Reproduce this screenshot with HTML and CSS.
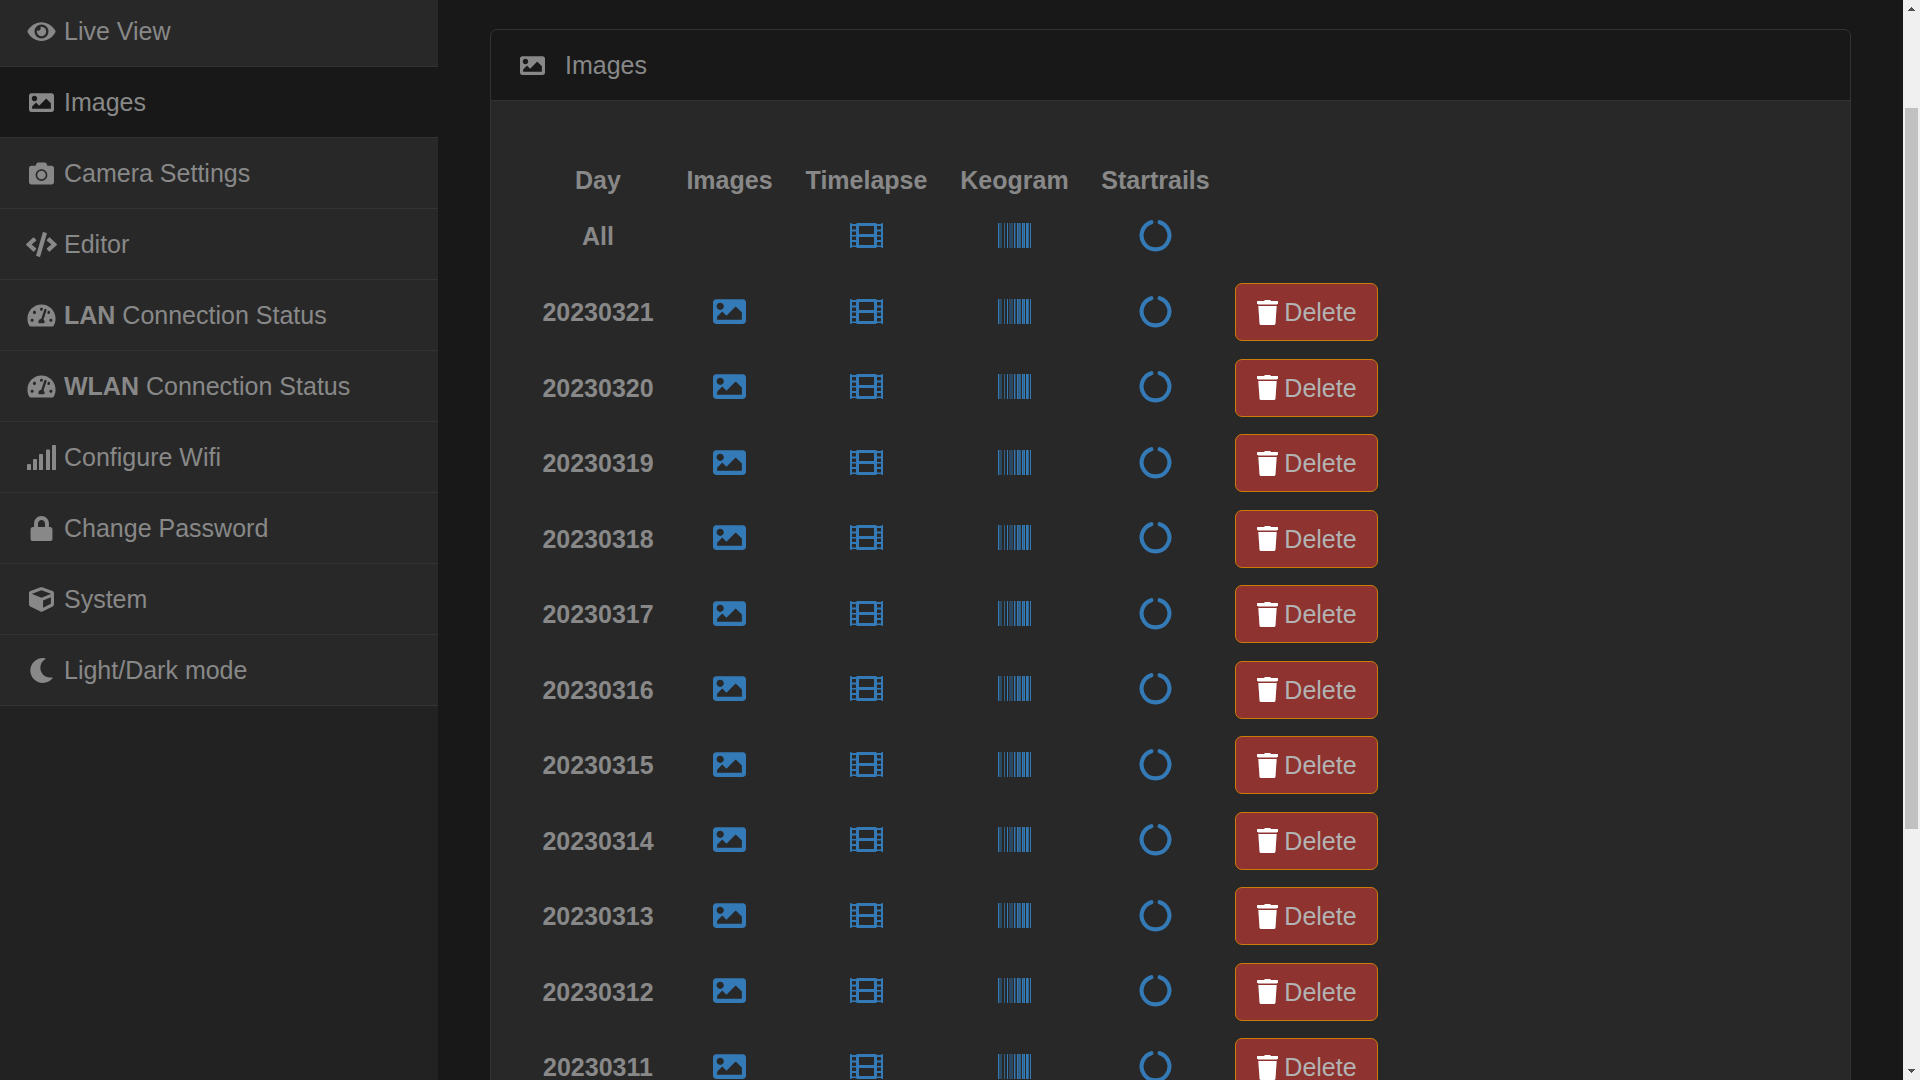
FILE: index.html
```
<!DOCTYPE html>
<html lang="en">
<head>
    <meta charset="UTF-8">
    <title>Images</title>
    <link rel="stylesheet" href="styles.css">
</head>
<body>
<svg class="sprite" aria-hidden="true">
    <symbol id="eye" viewBox="0 0 576 512"><path d="M572.52 241.4C518.29 135.59 410.93 64 288 64S57.68 135.64 3.48 241.41a32.35 32.35 0 0 0 0 29.19C57.71 376.41 165.07 448 288 448s230.32-71.64 284.52-177.41a32.35 32.35 0 0 0 0-29.19zM288 400a144 144 0 1 1 144-144 143.93 143.93 0 0 1-144 144zm0-240a95.31 95.31 0 0 0-25.31 3.79 47.85 47.85 0 0 1-66.9 66.9A95.78 95.78 0 1 0 288 160z"/></symbol>
    <symbol id="image" viewBox="0 0 512 512"><path d="M464 448H48c-26.51 0-48-21.49-48-48V112c0-26.51 21.49-48 48-48h416c26.51 0 48 21.49 48 48v288c0 26.51-21.49 48-48 48zM112 120c-30.928 0-56 25.072-56 56s25.072 56 56 56 56-25.072 56-56-25.072-56-56-56zM64 384h384V272l-87.515-87.515c-4.686-4.686-12.284-4.686-16.971 0L208 320l-55.515-55.515c-4.686-4.686-12.284-4.686-16.971 0L64 336v48z"/></symbol>
    <symbol id="camera" viewBox="0 0 512 512"><path d="M512 144v288c0 26.5-21.5 48-48 48H48c-26.5 0-48-21.5-48-48V144c0-26.5 21.5-48 48-48h88l12.3-32.9c7-18.7 24.9-31.1 44.9-31.1h125.5c20 0 37.9 12.4 44.9 31.1L376 96h88c26.5 0 48 21.5 48 48zM376 288c0-66.2-53.8-120-120-120s-120 53.8-120 120 53.8 120 120 120 120-53.8 120-120zm-32 0c0 48.5-39.5 88-88 88s-88-39.5-88-88 39.5-88 88-88 88 39.5 88 88z"/></symbol>
    <symbol id="code" viewBox="0 0 640 512"><path d="M278.9 511.5l-61-17.7c-6.4-1.8-10-8.5-8.2-14.9L346.2 8.7c1.8-6.4 8.5-10 14.9-8.2l61 17.7c6.4 1.8 10 8.5 8.2 14.9L293.8 503.3c-1.9 6.4-8.5 10.1-14.9 8.2zm-114-112.2l43.5-46.4c4.6-4.9 4.3-12.7-.8-17.2L117 256l90.6-79.7c5.1-4.5 5.5-12.3.8-17.2l-43.5-46.4c-4.5-4.8-12.1-5.1-17-.5L3.8 247.2c-5.1 4.7-5.1 12.8 0 17.5l144.1 135.1c4.9 4.6 12.5 4.4 17-.5zm327.2.6l144.1-135.1c5.1-4.7 5.1-12.8 0-17.5L492.1 112.1c-4.8-4.5-12.4-4.3-17 .5L431.6 159c-4.6 4.9-4.3 12.7.8 17.2L523 256l-90.6 79.7c-5.1 4.5-5.5 12.3-.8 17.2l43.5 46.4c4.5 4.9 12.1 5.1 17 .6z"/></symbol>
    <symbol id="gauge" viewBox="0 0 576 512"><path d="M288 32C128.94 32 0 160.94 0 320c0 52.8 14.25 102.26 39.06 144.8 5.61 9.62 16.3 15.2 27.44 15.2h443c11.14 0 21.83-5.58 27.44-15.2C561.75 422.26 576 372.8 576 320c0-159.06-128.94-288-288-288zm0 64c14.71 0 26.58 10.13 30.32 23.65-1.11 2.26-2.64 4.23-3.45 6.67l-9.22 27.67c-5.13 3.49-10.97 6.01-17.64 6.01-17.67 0-32-14.33-32-32S270.33 96 288 96zM96 384c-17.67 0-32-14.33-32-32s14.33-32 32-32 32 14.33 32 32-14.33 32-32 32zm48-160c-17.67 0-32-14.33-32-32s14.33-32 32-32 32 14.33 32 32-14.33 32-32 32zm246.77-72.41l-61.33 184C343.13 347.33 352 364.54 352 384c0 11.72-3.38 22.55-8.88 32H232.88c-5.5-9.45-8.88-20.28-8.88-32 0-33.94 26.5-61.43 59.9-63.59l61.34-184.01c4.17-12.56 17.73-19.45 30.36-15.17 12.57 4.19 19.35 17.79 15.17 30.36zm14.66 57.2l15.52-46.55c3.47-1.29 7.13-2.23 11.05-2.23 17.67 0 32 14.33 32 32s-14.33 32-32 32c-11.38-.01-20.89-6.28-26.57-15.22zM480 384c-17.67 0-32-14.33-32-32s14.33-32 32-32 32 14.33 32 32-14.33 32-32 32z"/></symbol>
    <symbol id="signal" viewBox="0 0 29 25"><path d="M1 19h2q1 0 1 1v5H0v-5q0-1 1-1zM7 14h2q1 0 1 1v10H6V15q0-1 1-1zM13 9h2q1 0 1 1v15h-4V10q0-1 1-1zM20 4.500h2q1 0 1 1V25h-4V5.500q0-1 1-1zM26 0h2q1 0 1 1v24h-4V1q0-1 1-1z"/></symbol>
    <symbol id="lock" viewBox="0 0 448 512"><path d="M400 224h-24v-72C376 68.200 307.800 0 224 0S72 68.200 72 152v72H48c-26.500 0-48 21.500-48 48v192c0 26.500 21.500 48 48 48h352c26.500 0 48-21.500 48-48V272c0-26.500-21.500-48-48-48zm-104 0H152v-72c0-39.700 32.300-72 72-72s72 32.300 72 72v72z"/></symbol>
    <symbol id="cube" viewBox="0 0 512 512"><path d="M239.1 6.3l-208 78c-18.7 7-31.1 25-31.1 45v225.1c0 18.2 10.3 34.8 26.5 42.9l208 104c13.5 6.8 29.4 6.8 42.9 0l208-104c16.3-8.1 26.5-24.8 26.5-42.9V129.3c0-20-12.4-37.9-31.1-44.9l-208-78C262 2.2 250 2.2 239.1 6.3zM256 68.4l192 72v1.1l-192 78-192-78v-1.1l192-72zm32 356V275.5l160-65v133.9l-160 80z"/></symbol>
    <symbol id="moon" viewBox="0 0 512 512"><path d="M283.211 512c78.962 0 151.079-35.925 198.857-94.792 7.068-8.708-.639-21.43-11.562-19.35-124.203 23.654-238.262-71.576-238.262-196.954 0-72.222 38.662-138.635 101.498-174.394 9.686-5.512 7.25-20.197-3.756-22.23A258.156 258.156 0 0 0 283.211 0c-141.309 0-256 114.511-256 256 0 141.309 114.511 256 256 256z"/></symbol>
    <symbol id="film" viewBox="0 0 33 33"><path fill-rule="evenodd" d="M0 4h1.500v1h5V4h20v1h5V4H33v25h-1.500v-1h-5v1h-20v-1h-5v1H0zM2 7v3.500h4V7zM2 12.500V16h4v-3.500zM2 17.500V21h4v-3.500zM2 23v3.500h4V23zM27 7v3.500h4V7zM27 12.500V16h4v-3.500zM27 17.500V21h4v-3.500zM27 23v3.500h4V23zM9 7v8h15V7zM9 18v8h15v-8z"/></symbol>
    <symbol id="barcode" viewBox="0 0 33 33">
        <path opacity=".4" d="M1 4h3v25H1zM11 4h4v25h-4zM17 4h1v25h-1z"/>
        <path opacity=".7" d="M6 4h1v25H6zM20 4h3v25h-3zM25 4h1v25h-1zM30 4h1v25h-1z"/>
        <path d="M0 4h1v25H0zM9 4h1v25H9zM16 4h1v25h-1zM19 4h1v25h-1zM24 4h1v25h-1zM26 4h1v25h-1zM28 4h2v25h-2zM32 4h1v25h-1z"/>
    </symbol>
    <symbol id="circle" viewBox="0 0 512 512"><path fill="none" stroke="currentColor" stroke-width="64" stroke-linecap="round" d="M191 50A216 216 0 1 0 321 50"/></symbol>
    <symbol id="trash" viewBox="0 0 21 25"><path d="M7 1l1-1h5l1 1h6.500q.5 0 .5.500V4H0V1.500Q0 1 .5 1z"/><path opacity=".5" d="M1 4h19v1H1z"/><path d="M1.300 6h18.400l-1.200 17.500q-.2 1.500-1.500 1.500H4q-1.300 0-1.500-1.500z"/></symbol>
    <symbol id="arrow" viewBox="0 0 7 4"><path d="M3 0h1v1h1v1h1v1h1v1H0V3h1V2h1V1h1z"/></symbol>
</svg>

<div class="page">
    <nav class="sidebar">
        <ul>
            <li><a href="#"><svg><use href="#eye"/></svg><span>Live View</span></a></li>
            <li><a href="#" class="active"><svg><use href="#image"/></svg><span>Images</span></a></li>
            <li><a href="#"><svg><use href="#camera"/></svg><span>Camera Settings</span></a></li>
            <li><a href="#"><svg><use href="#code"/></svg><span>Editor</span></a></li>
            <li><a href="#"><svg><use href="#gauge"/></svg><span><b>LAN</b> Connection Status</span></a></li>
            <li><a href="#"><svg><use href="#gauge"/></svg><span><b>WLAN</b> Connection Status</span></a></li>
            <li><a href="#"><svg><use href="#signal"/></svg><span>Configure Wifi</span></a></li>
            <li><a href="#"><svg><use href="#lock"/></svg><span>Change Password</span></a></li>
            <li><a href="#"><svg><use href="#cube"/></svg><span>System</span></a></li>
            <li><a href="#"><svg><use href="#moon"/></svg><span>Light/Dark mode</span></a></li>
        </ul>
    </nav>

    <main class="content">
        <section class="panel">
            <h1 class="panel-heading"><svg><use href="#image"/></svg>Images</h1>
            <div class="panel-body">
                <table>
                    <colgroup>
                        <col class="col-day">
                        <col class="col-images">
                        <col class="col-timelapse">
                        <col class="col-keogram">
                        <col class="col-startrails">
                        <col class="col-delete">
                    </colgroup>
                    <thead>
                        <tr>
                            <th>Day</th>
                            <th>Images</th>
                            <th>Timelapse</th>
                            <th>Keogram</th>
                            <th>Startrails</th>
                            <td></td>
                        </tr>
                    </thead>
                    <tbody id="days"></tbody>
                </table>
            </div>
        </section>
    </main>

    <div class="scrollbar">
        <svg><use href="#arrow"/></svg>
        <div class="track"><div class="thumb"></div></div>
        <svg class="down"><use href="#arrow"/></svg>
    </div>
</div>

<script>
    var days = ["All", "20230321", "20230320", "20230319", "20230318", "20230317", "20230316",
        "20230315", "20230314", "20230313", "20230312", "20230311"];
    var html = "";

    function link(icon, label) {
        return '<td><a href="#" aria-label="' + label + '"><svg><use href="#' + icon + '"/></svg></a></td>';
    }

    for (var i = 0; i < days.length; i++) {
        var all = days[i] == "All";
        html += "<tr><th>" + days[i] + "</th>";
        html += all ? "<td></td>" : link("image", "Images");
        html += link("film", "Timelapse") + link("barcode", "Keogram") + link("circle", "Startrails");
        html += all ? "<td></td>" : '<td><button type="button" class="delete"><svg><use href="#trash"/></svg>Delete</button></td>';
        html += "</tr>";
    }

    document.getElementById("days").innerHTML = html;
</script>
</body>
</html>
```
FILE: styles.css
```
* {
    box-sizing: border-box;
    margin: 0;
    padding: 0;
}

body {
    background: #181818;
    color: #888;
    font-family: "Liberation Sans", Arial, sans-serif;
    font-size: 25px;
    line-height: 36px;
    overflow: hidden;
}

a {
    color: #337ab7;
    text-decoration: none;
}

svg {
    fill: currentColor;
}

.sprite {
    display: none;
}

.page {
    display: flex;
    height: 100vh;
    overflow: hidden;
}

/* sidebar */
.sidebar {
    flex: 0 0 438px;
    background: #222;
}

.sidebar ul {
    list-style: none;
}

.sidebar li {
    border-bottom: 1px solid #333;
}

.sidebar a {
    display: flex;
    align-items: center;
    gap: 7px;
    padding: 17px 26px;
    background: #282828;
    color: #888;
}

.sidebar li:first-child a {
    padding-top: 13px;
}

.sidebar a.active {
    background: #181818;
}

.sidebar svg {
    width: 31px;
    height: 25px;
}

/* content */
.content {
    flex: 1;
    padding: 29px 52px 0;
}

.panel {
    border: 1px solid #333;
    border-radius: 7px;
    background: #282828;
    overflow: hidden;
}

.panel-heading {
    display: flex;
    align-items: center;
    gap: 17px;
    padding: 17px 26px;
    border-bottom: 1px solid #333;
    background: #181818;
    font-size: 25px;
    font-weight: normal;
}

.panel-heading svg {
    width: 31px;
    height: 25px;
}

.panel-body {
    padding: 61px 35px;
}

table {
    width: 861px;
    table-layout: fixed;
    border-collapse: collapse;
}

.col-day {
    width: 144px;
}

.col-images {
    width: 119px;
}

.col-timelapse {
    width: 155px;
}

.col-keogram,
.col-startrails {
    width: 141px;
}

.col-delete {
    width: 161px;
}

th,
td {
    text-align: center;
    vertical-align: middle;
    white-space: nowrap;
}

tbody tr {
    height: 76px;
}

tbody tr:nth-child(odd) {
    height: 75px;
}

tbody tr:first-child {
    height: 76px;
}

td a {
    display: block;
    padding-bottom: 2px;
}

td svg {
    display: block;
    width: 33px;
    height: 33px;
    margin: 0 auto;
}

.delete {
    display: flex;
    align-items: center;
    gap: 6px;
    margin: 0 auto;
    padding: 10px 20px 10px 21px;
    border: 1px solid #cd7b08;
    border-radius: 7px;
    background: #8e3330;
    color: #b3b3b3;
    font: inherit;
    cursor: pointer;
}

.delete svg {
    width: 21px;
    height: 25px;
    color: #fff;
}

/* scrollbar */
.scrollbar {
    flex: 0 0 17px;
    display: flex;
    flex-direction: column;
    align-items: center;
    padding: 7px 0;
    background: #f0f0f0;
    color: #505050;
}

.scrollbar svg {
    width: 7px;
    height: 4px;
}

.scrollbar .down {
    transform: rotate(180deg);
}

.track {
    flex: 1;
    width: 13px;
    padding: 97px 0 240px;
}

.thumb {
    height: 100%;
    background: #c1c1c1;
}
```
